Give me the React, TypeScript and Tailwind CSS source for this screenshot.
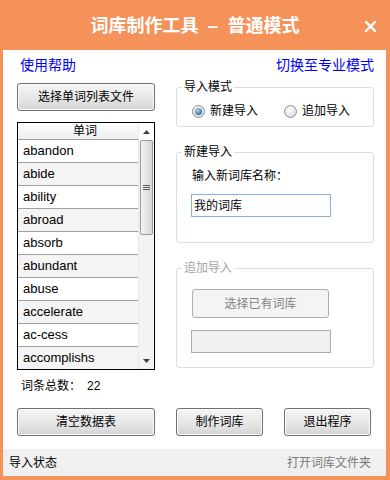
import React from 'react';

const words = ['abandon', 'abide', 'ability', 'abroad', 'absorb', 'abundant', 'abuse', 'accelerate', 'ac-cess', 'accomplishs'];

function WinButton({ children, className = '' }: { children: React.ReactNode; className?: string }) {
  return (
    <button className={`flex items-center justify-center rounded-[3px] border border-[#707070] bg-linear-to-b from-[#f5f5f5] via-[#e8e8e8] to-[#d4d4d4] text-[12px] leading-none text-black shadow-[inset_0_0_0_1px_#fbfbfb] ${className}`}>
      {children}
    </button>
  );
}

function Radio({ checked, label, className = '' }: { checked?: boolean; label: string; className?: string }) {
  return (
    <div className={`flex items-center ${className}`}>
      <span className="flex h-[13px] w-[13px] items-center justify-center rounded-full border border-[#8c8e90] bg-[radial-gradient(circle_at_40%_35%,#ffffff,#d2d2d2)]">
        {checked && <span className="h-[7px] w-[7px] rounded-full bg-[radial-gradient(circle_at_40%_35%,#a8ddf8,#2a68a8_75%)]" />}
      </span>
      <span className="ml-[5px] text-[12px] leading-[16px]">{label}</span>
    </div>
  );
}

function Group({ title, disabled, className = '', children }: { title: string; disabled?: boolean; className?: string; children: React.ReactNode }) {
  return (
    <fieldset className={`rounded-[3px] border border-[#d5dfe5] ${className}`}>
      <legend className={`ml-[5px] px-[2px] text-[12px] leading-[18px] ${disabled ? 'text-[#a3a3a3]' : 'text-black'}`}>{title}</legend>
      {children}
    </fieldset>
  );
}

function WordList() {
  return (
    <div className="mt-[11px] flex h-[248px] overflow-hidden border border-black">
      <div className="flex-1">
        <div className="flex h-[17px] items-center justify-center border-b border-[#a0a0a0] bg-linear-to-b from-white to-[#eceef0] pl-[14px] text-[12px] leading-none">
          单词
        </div>
        {words.map((w, i) => (
          <div
            key={w}
            className={`flex h-[23px] items-center border-b border-[#a0a0a0] pl-[5px] text-[13px] ${i % 2 === 1 ? 'bg-[#f4f4f4]' : 'bg-white'}`}
          >
            {w}
          </div>
        ))}
      </div>
      <div className="flex w-[16px] flex-col border-l border-[#e8e8e8] bg-[#f3f3f3]">
        <div className="flex h-[17px] items-center justify-center bg-white">
          <svg width="7" height="4" viewBox="0 0 7 4"><path d="M3.5 0 L7 4 L0 4 Z" fill="#404040" /></svg>
        </div>
        <div className="mx-[1px] flex h-[95px] items-center justify-center rounded-[2px] border border-[#9a9a9a] bg-linear-to-r from-[#f3f3f3] to-[#d6d6d6]">
          <svg width="7" height="6" viewBox="0 0 7 6">
            <path d="M0 0.5 H7 M0 2.5 H7 M0 4.5 H7" stroke="#5a5a5a" strokeWidth="1" />
          </svg>
        </div>
        <div className="flex-1" />
        <div className="flex h-[17px] items-center justify-center">
          <svg width="7" height="4" viewBox="0 0 7 4"><path d="M0 0 L7 0 L3.5 4 Z" fill="#404040" /></svg>
        </div>
      </div>
    </div>
  );
}

export default function App() {
  return (
    <div className="flex h-[480px] w-[390px] flex-col bg-[#f5925a] font-['Liberation_Sans','Noto_Sans_CJK_SC',sans-serif] text-black">
      <div className="grid h-[50px] shrink-0 grid-cols-[1fr_auto_1fr] items-center pt-[2px] text-white">
        <div />
        <div className="flex items-center text-[18px] font-bold leading-[24px]">
          <span>词库制作工具</span>
          <span className="w-[29px] text-center">–</span>
          <span>普通模式</span>
        </div>
        <div className="flex justify-end pr-[14px]">
          <svg width="11" height="11" viewBox="0 0 11 11">
            <path d="M1 1 L10 10 M10 1 L1 10" stroke="white" strokeWidth="2.4" strokeLinecap="round" />
          </svg>
        </div>
      </div>

      <div className="ml-[3px] mr-[4px] flex flex-1 flex-col bg-white pl-[14px] pr-[12px] pt-[5px]">
        <div className="flex h-[20px] items-center justify-between text-[14px] leading-[20px] text-[#0000f5]">
          <span className="pl-[3px]">使用帮助</span>
          <span>切换至专业模式</span>
        </div>

        <div className="grid grid-cols-[138px_198px] gap-x-[21px]">
          <div className="flex flex-col">
            <WinButton className="mt-[8px] h-[28px] w-full">选择单词列表文件</WinButton>
            <WordList />
            <div className="mt-[7px] flex h-[18px] items-center pl-[4px] text-[12px]">
              <span>词条总数：</span>
              <span className="ml-[6px]">22</span>
            </div>
          </div>

          <div className="flex flex-col">
            <Group title="导入模式" className="mt-[3px] pb-[7px]">
              <div className="mt-[7px] flex h-[16px] items-center">
                <Radio checked label="新建导入" className="ml-[15px]" />
                <Radio label="追加导入" className="ml-[26px]" />
              </div>
            </Group>

            <Group title="新建导入" className="mt-[16px] pb-[25px]">
              <div className="ml-[15px] mt-[6px] text-[12px] leading-[18px]">输入新词库名称：</div>
              <div className="ml-[14px] mt-[9px] flex h-[23px] w-[140px] items-center border border-[#7eb4ea] bg-white pl-[2px] text-[12px]">
                我的词库
              </div>
            </Group>

            <Group title="追加导入" disabled className="mt-[16px] pb-[14px]">
              <div className="ml-[15px] mt-[12px] flex h-[29px] w-[137px] items-center justify-center rounded-[3px] border border-[#adadad] bg-[#f4f4f4] text-[12px] text-[#838383]">
                选择已有词库
              </div>
              <div className="ml-[14px] mt-[12px] h-[23px] w-[140px] border border-[#adadad] bg-[#f0f0f0]" />
            </Group>
          </div>

          <WinButton className="mt-[13px] h-[28px] w-full">清空数据表</WinButton>
          <div className="mt-[13px] flex gap-[21px]">
            <WinButton className="h-[28px] w-[87px]">制作词库</WinButton>
            <WinButton className="h-[28px] w-[87px]">退出程序</WinButton>
          </div>
        </div>
      </div>

      <div className="ml-[3px] mr-[4px] flex h-[27px] shrink-0 items-center justify-between bg-[#f0f0f0] pl-[6px] pr-[15px] text-[12px]">
        <span>导入状态</span>
        <span className="text-[#7a7a7a]">打开词库文件夹</span>
      </div>
      <div className="h-[4px] shrink-0" />
    </div>
  );
}
